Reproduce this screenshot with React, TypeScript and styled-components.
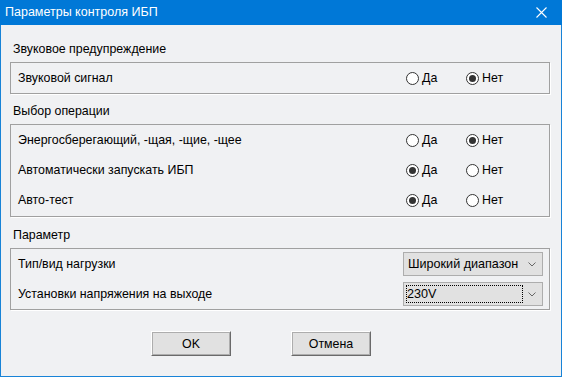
import React from "react";
import styled, { createGlobalStyle } from "styled-components";

const Global = createGlobalStyle`
  html, body {
    margin: 0;
    padding: 0;
    background: #f0f1f3;
  }
  * { box-sizing: border-box; }
`;

const Window = styled.div`
  width: 562px;
  height: 377px;
  display: flex;
  flex-direction: column;
  background: #f0f1f3;
  border: 1px solid #1883d7;
  border-top: none;
  font-family: "Liberation Sans", Arial, sans-serif;
  font-size: 12.4px;
  color: #000;
`;

const TitleBar = styled.div`
  height: 25px;
  margin: 0 -1px;
  padding: 0 0 1px 5px;
  display: flex;
  align-items: center;
  justify-content: space-between;
  background: #0078d7;
  color: #fff;
  font-size: 12.5px;
`;

const CloseBtn = styled.div`
  width: 36px;
  height: 24px;
  display: flex;
  align-items: center;
  justify-content: center;
  margin-right: 3px;
`;

const Body = styled.div`
  flex: 1;
  display: flex;
  flex-direction: column;
  padding: 17px 11px 0 9px;
`;

const GroupLabel = styled.div<{ $top: number }>`
  height: 15px;
  line-height: 15px;
  margin-top: ${(p) => p.$top}px;
  margin-bottom: 5px;
  padding-left: 3px;
`;

const GroupBox = styled.div<{ $pb?: number }>`
  border: 1px solid #a0a0a0;
  box-shadow: 1px 1px 0 #fff;
  padding: 0 0 ${(p) => p.$pb ?? 0}px 7px;
  display: flex;
  flex-direction: column;
`;

const Row = styled.div`
  height: 30px;
  display: flex;
  align-items: center;
  justify-content: space-between;
`;

const Choices = styled.div`
  display: flex;
  width: 143px;
`;

const Choice = styled.label`
  width: 60px;
  display: flex;
  align-items: center;
  gap: 3px;
`;

const Dot = styled.span<{ $on: boolean }>`
  width: 13px;
  height: 13px;
  border-radius: 50%;
  border: 1px solid #333;
  background: #fff;
  display: flex;
  align-items: center;
  justify-content: center;
  &::after {
    content: "";
    width: 7px;
    height: 7px;
    border-radius: 50%;
    background: ${(p) => (p.$on ? "#333" : "transparent")};
  }
`;

const Select = styled.div`
  width: 140px;
  height: 24px;
  margin-right: 6px;
  padding: 2px;
  display: flex;
  align-items: center;
  background: #e1e1e1;
  border: 1px solid #adadad;
  font-size: 12.6px;
`;

const SelectText = styled.span<{ $focus?: boolean }>`
  flex: 1;
  height: 100%;
  display: flex;
  align-items: center;
  padding-left: ${(p) => (p.$focus ? 0 : 1)}px;
  border: 1px dotted ${(p) => (p.$focus ? "#000" : "transparent")};
`;

const Chevron = styled.span`
  width: 17px;
  display: flex;
  justify-content: center;
`;

const Buttons = styled.div`
  display: flex;
  gap: 60px;
  margin-top: 21px;
  padding-left: 141px;
`;

const Button = styled.button`
  width: 80px;
  height: 25px;
  font-family: "Liberation Sans", Arial, sans-serif;
  font-size: 12.4px;
  color: #000;
  background: #e1e1e1;
  border: 1px solid;
  border-color: #fff #6a6a6a #6a6a6a #fff;
  box-shadow: inset 0 0 0 1px #adadad;
  padding: 0;
`;

const Radio = ({ on, label }: { on: boolean; label: string }) => (
  <Choice>
    <Dot $on={on} />
    {label}
  </Choice>
);

const YesNo = ({ yes }: { yes: boolean }) => (
  <Choices>
    <Radio on={yes} label="Да" />
    <Radio on={!yes} label="Нет" />
  </Choices>
);

const Arrow = () => (
  <svg width="8" height="5" viewBox="0 0 8 5">
    <path d="M0.5 0.5 L4 4 L7.5 0.5" fill="none" stroke="#666" strokeWidth="1" />
  </svg>
);

export default function App() {
  return (
    <>
      <Global />
      <Window>
        <TitleBar>
          <span>Параметры контроля ИБП</span>
          <CloseBtn>
            <svg width="11" height="11" viewBox="0 0 11 11">
              <path d="M0.5 0.5 L10.5 10.5 M10.5 0.5 L0.5 10.5" stroke="#fff" strokeWidth="1.1" />
            </svg>
          </CloseBtn>
        </TitleBar>
        <Body>
          <GroupLabel $top={0}>Звуковое предупреждение</GroupLabel>
          <GroupBox>
            <Row>
              <span>Звуковой сигнал</span>
              <YesNo yes={false} />
            </Row>
          </GroupBox>

          <GroupLabel $top={10}>Выбор операции</GroupLabel>
          <GroupBox $pb={1}>
            <Row>
              <span>Энергосберегающий, -щая, -щие, -щее</span>
              <YesNo yes={false} />
            </Row>
            <Row>
              <span>Автоматически запускать ИБП</span>
              <YesNo yes={true} />
            </Row>
            <Row>
              <span>Авто-тест</span>
              <YesNo yes={true} />
            </Row>
          </GroupBox>

          <GroupLabel $top={11}>Параметр</GroupLabel>
          <GroupBox>
            <Row>
              <span>Тип/вид нагрузки</span>
              <Select>
                <SelectText>Широкий диапазон</SelectText>
                <Chevron>
                  <Arrow />
                </Chevron>
              </Select>
            </Row>
            <Row>
              <span>Установки напряжения на выходе</span>
              <Select>
                <SelectText $focus>230V</SelectText>
                <Chevron>
                  <Arrow />
                </Chevron>
              </Select>
            </Row>
          </GroupBox>

          <Buttons>
            <Button>OK</Button>
            <Button>Отмена</Button>
          </Buttons>
        </Body>
      </Window>
    </>
  );
}
